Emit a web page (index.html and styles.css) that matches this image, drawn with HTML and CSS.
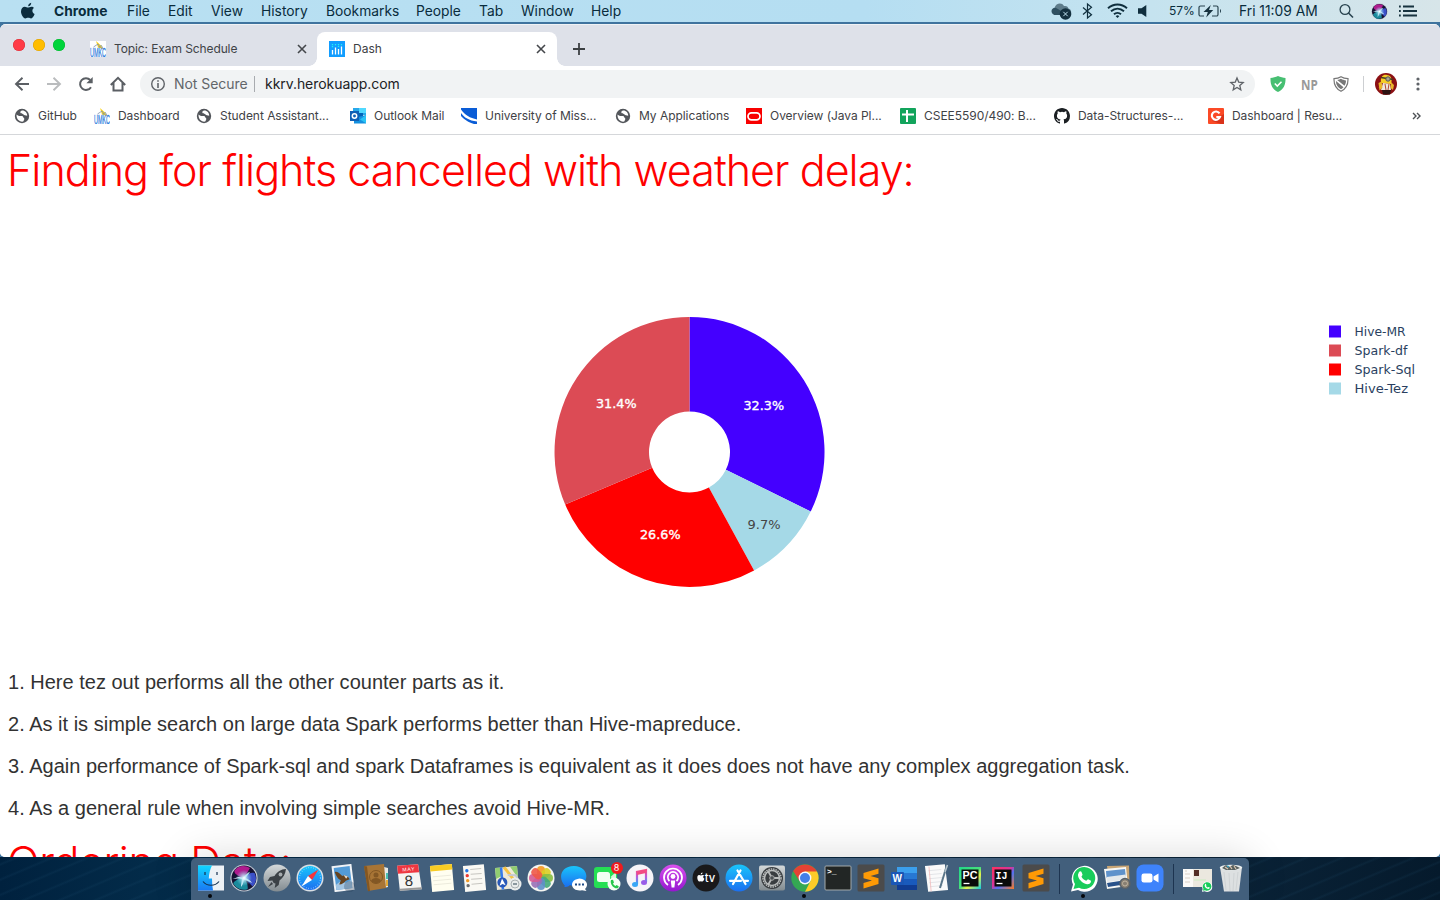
FILE: index.html
```html
<!DOCTYPE html>
<html lang="en">
<head>
<meta charset="utf-8">
<title>Dash</title>
<link rel="stylesheet" href="styles.css">
</head>
<body>
<svg class="defs" width="0" height="0">
  <defs>
    <linearGradient id="blue" x2="0" y2="1"><stop stop-color="#19c5fb"/><stop offset="1" stop-color="#1b6ff0"/></linearGradient>
    <linearGradient id="silver" x2="0" y2="1"><stop stop-color="#d4d8d9"/><stop offset="1" stop-color="#828b90"/></linearGradient>
    <linearGradient id="finder" x2="0" y2="1"><stop stop-color="#10d5ff"/><stop offset="1" stop-color="#1a79f4"/></linearGradient>
    <linearGradient id="music" x2="0" y2="1"><stop stop-color="#fa4b83"/><stop offset=".5" stop-color="#b65ce0"/><stop offset="1" stop-color="#2ba9f5"/></linearGradient>
    <linearGradient id="pod" x2="0" y2="1"><stop stop-color="#d951ee"/><stop offset="1" stop-color="#9416cf"/></linearGradient>
    <linearGradient id="ij" x2="1" y2="1"><stop stop-color="#fe315d"/><stop offset=".45" stop-color="#d6359b"/><stop offset=".6" stop-color="#4e72f5"/><stop offset="1" stop-color="#f97a25"/></linearGradient>
    <linearGradient id="pc" x2="1" y2="1"><stop stop-color="#21d789"/><stop offset=".5" stop-color="#48e07c"/><stop offset=".65" stop-color="#e9f04a"/><stop offset="1" stop-color="#0bcbe5"/></linearGradient>
    <radialGradient id="glow"><stop stop-color="#fff"/><stop offset=".3" stop-color="#bfeaf7" stop-opacity=".8"/><stop offset="1" stop-color="#7fd4f0" stop-opacity="0"/></radialGradient>
    <symbol id="globe" viewBox="0 0 16 16"><circle cx="8" cy="8" r="7.200" fill="#53565b"/><path d="M2.600 6.500c1.800 2 3.400 1.200 5.400 1.600 1.300.3 1 1.400 1.900 1.900 1 .6.100 2.300-.7 3.600-4.200.6-7.200-3.300-6.600-7.100zM8 2.600c-1.700.7-2.200 1.700-1.200 2.700.8.800 2.200.2 2.700 1.300.5 1 2.300.9 3.700 1.200C13.400 5 11 2.400 8 2.600z" fill="#fff"/></symbol>
    <symbol id="umkc" viewBox="0 0 16 16"><path d="M6 0l5 4.500L13 8 8 6.500z" fill="#f9d21d"/><path d="M3.500 6L8 3l2.500 4M8.500 6l3-1.500L13 8" fill="none" stroke="#7d91a8" stroke-width=".8"/><text x="0" y="15.600" font-family="Liberation Sans" font-size="12.500" fill="#2f7ddd" stroke="#2f7ddd" stroke-width=".3" textLength="16" lengthAdjust="spacingAndGlyphs">UMKC</text></symbol>
    <symbol id="sublime" viewBox="0 0 28 28"><rect x=".5" y=".5" width="27" height="27" rx="1.500" fill="#4b4b4b"/><path d="M21.500 4.500v5.300L13.500 12l8 2.300V20L6.500 24.500V19l8.500-2.400-8.500-2.400V9z" fill="#ff9a05"/></symbol>
    <symbol id="wa" viewBox="0 0 28 28"><path d="M1 27.500l2-7A13 13 0 1 1 8 26z" fill="#fff"/><path d="M3.500 25l1.500-5A11 11 0 1 1 9 23.700z" fill="#19cc5b"/><path d="M9 8c1-1.200 2.200-.8 2.500 0l1 2.500c.2.800-1 1.700-1 2.200 1.200 2.100 2.600 3.200 4.600 4.100.8-.2 1.300-1.700 2-1.600l2.900 1.500c.3 2.600-2.200 3.700-4 3.500C12.500 19.500 7.500 14.500 8 10.500z" fill="#fff"/></symbol>
    <symbol id="colorwheel" viewBox="0 0 28 28"><circle cx="14" cy="14" r="13.600" fill="#c3ccd6"/><circle cx="14" cy="14" r="12.500" fill="#151232"/><path d="M14 14C5 15 3 19 3.500 20a12 12 0 0 0 14 5.200c1-3-1-8-3.500-11.200z" fill="#1a8a9c"/><path d="M14 14C6 12 3 8 5 6c4-5 10-5 15-2z" fill="#b01c8e"/><path d="M14 14c4-5 8-6 10.500-5 3 6 1 11-2 13.500C20 20 18 17 14 14z" fill="#3b50c8"/><path d="M2.500 15C8 12.500 10 12.500 13 13.500c4-4 5-5 7-5.500l-4.500 6c4 2 5.500 3 6.500 5-4-2-6-3-8-3-1 4-2 6-3 7 0-4 1-6 1-8-4-1-6.500-.5-9.500 0z" fill="#cdeaf6"/><circle cx="14" cy="14" r="8" fill="url(#glow)"/></symbol>
  </defs>
</svg>
<div class="desktop">
<header class="menubar">
  <svg width="16" height="18" viewBox="0 0 16 18"><path d="M11.200.8c.2 1.800-1.300 3.500-3 3.500C8 2.600 9.600 1 11.200.8zM14 6.100c-2.400 1.400-2 4.800.6 5.900-.8 2.300-2.200 4.400-3.500 4.400-1.200 0-1.500-.7-2.900-.7s-1.800.7-2.900.7C3.300 16.400 1 12.500 1 9.500c0-3 1.800-4.700 3.800-4.700 1.300 0 2.400.8 3.200.8s2-.9 3.500-.9c1 0 1.900.5 2.500 1.400z" fill="#0b2c3e"/></svg>
  <b>Chrome</b><span>File</span><span>Edit</span><span>View</span><span>History</span><span>Bookmarks</span><span>People</span><span>Tab</span><span>Window</span><span>Help</span>
  <svg width="21" height="18" viewBox="0 0 21 18"><path d="M4 12.500A3.700 3.700 0 0 1 3.500 6C5 .8 11 .2 13 4c3-.5 4 1 4.500 2.500 2.500.5 3 3 2.500 5z" fill="#5e7c8b"/><path d="M1 11c-2-4 2.500-6.500 5-4.500l5 3v3.500H4c-1 0-2-.500-3-2z" fill="#2e4f60"/><circle cx="14.500" cy="12" r="5.800" fill="#14303f"/><path d="M12.300 9.800l4.400 4.400m0-4.400l-4.400 4.400" stroke="#bfe0ee" stroke-width="1"/></svg>
  <svg width="11" height="18" viewBox="0 0 11 18"><path d="M1 5.500l8.500 7.200L5.500 16V2l4 3.300L1 12.500" fill="none" stroke="#0f2e3d" stroke-width="1.200"/></svg>
  <svg width="22" height="18" viewBox="0 0 22 18"><g fill="none" stroke="#0f2e3d" stroke-width="1.900"><path d="M1 6.200c5.500-5 13.500-5 19 0"/><path d="M4 9.300c4-3.500 9-3.500 13 0"/><path d="M7 12.300c2-1.900 5-1.900 7 0"/></g><path d="M8.700 14.200a2.500 2.500 0 0 1 3.600 0l-1.800 1.900z" fill="#0f2e3d"/></svg>
  <svg width="10" height="18" viewBox="0 0 10 18"><path d="M0 6.300h3.500L8.300 3v12l-4.800-3.300H0z" fill="#0f2e3d"/></svg>
  <span class="battery">57%</span>
  <svg width="24" height="18" viewBox="0 0 24 18"><path d="M7 4H2.500A1.500 1.500 0 0 0 1 5.500v7A1.500 1.500 0 0 0 2.500 14H6m8 0h4.500a1.500 1.500 0 0 0 1.500-1.500v-7A1.500 1.500 0 0 0 18.500 4H15" fill="none" stroke="#29434f" stroke-width="1.200"/><path d="M12.800 3L5.500 10h4.300l-1.600 5.500L15.200 8H11zM22 7c1.300.500 1.300 3.500 0 4z" fill="#17323f"/></svg>
  <span>Fri 11:09 AM</span>
  <svg width="16" height="18" viewBox="0 0 16 18"><circle cx="6" cy="7.500" r="4.900" fill="none" stroke="#29434f" stroke-width="1.300"/><path d="M9.500 11l4.500 4.500" stroke="#29434f" stroke-width="1.600"/></svg>
  <svg width="17" height="17"><use href="#colorwheel"/></svg>
  <svg width="19" height="18" viewBox="0 0 19 18"><path d="M0 4.500h1.800M0 9h1.800M0 13.500h1.800M4 4.500h11M4 9h14M4 13.500h14" stroke="#17323f" stroke-width="1.900"/></svg>
</header>

<main class="window">
  <div class="tabs">
    <div class="lights"><i class="red"></i><i class="amber"></i><i class="green"></i></div>
    <div class="tab">
      <svg class="favicon white" width="16" height="16"><use href="#umkc"/></svg>
      <span class="topic">Topic: Exam Schedule</span>
      <svg class="close" width="10" height="10" viewBox="0 0 10 10"><path d="M1 1l8 8M9 1L1 9"/></svg>
    </div>
    <div class="tab active">
      <svg class="favicon" width="16" height="16" viewBox="0 0 16 16"><path d="M0 0h16v16H0z" fill="#119dff"/><path d="M3.500 9v4.500M6.500 6.500v7M9.500 8v5.500M12.500 5.500v8" stroke="#fff" stroke-width="1.300"/><path d="M3.500 3v4M6.500 3v2M9.500 3v3M12.500 3v1.500" stroke="#25f2f2" stroke-width="1.300" stroke-dasharray="1.200 .8"/></svg>
      <span>Dash</span>
      <svg class="close" width="10" height="10" viewBox="0 0 10 10"><path d="M1 1l8 8M9 1L1 9"/></svg>
    </div>
    <svg class="newtab" width="12" height="12" viewBox="0 0 12 12"><path d="M6 0v12M0 6h12" stroke="#3c4043" stroke-width="1.800"/></svg>
  </div>

  <div class="toolbar">
    <svg width="16" height="16" viewBox="0 0 16 16"><path d="M15 8H2m6.500-6.300L2 8l6.500 6.300" fill="none" stroke="#5b5f64" stroke-width="1.900"/></svg>
    <svg width="16" height="16" viewBox="0 0 16 16"><path d="M1 8h13M7.500 1.700L14 8l-6.500 6.300" fill="none" stroke="#babcbe" stroke-width="1.900"/></svg>
    <svg width="16" height="16" viewBox="0 0 16 16"><path d="M13 11.200A5.900 5.900 0 1 1 12.300 4" fill="none" stroke="#5b5f64" stroke-width="2"/><path d="M14.700 1v6.300H8.400z" fill="#5b5f64"/></svg>
    <svg width="16" height="16" viewBox="0 0 16 16"><path d="M.8 9L8 1.800 15.200 9M3.500 7v7.600h9V7" fill="none" stroke="#5b5f64" stroke-width="2"/></svg>
    <div class="omnibox">
      <svg width="16" height="16" viewBox="0 0 16 16"><circle cx="8" cy="8" r="6.300" fill="none" stroke="#5f6368" stroke-width="1.400"/><path d="M8 4.200v1.600M8 7v5" stroke="#5f6368" stroke-width="1.600"/></svg>
      <span class="insecure">Not Secure</span><i class="bar"></i><span class="url">kkrv.herokuapp.com</span>
      <svg class="star" width="16" height="16" viewBox="0 0 16 16"><path d="M8 2l1.700 4.100 4.500.4-3.400 2.900 1 4.400L8 11.500l-3.800 2.300 1-4.400-3.400-2.900 4.500-.4z" fill="none" stroke="#5f6368" stroke-width="1.300"/></svg>
    </div>
    <svg width="16" height="16" viewBox="0 0 16 16"><path d="M8 0c2.500 1.200 5 1.800 7.500 2 .3 7-2 11.500-7.500 14C2.500 13.500.2 9 .5 2 3 1.800 5.500 1.200 8 0z" fill="#47bf72"/><path d="M4.800 7.500l2.500 2.600 4.200-4.300" stroke="#fff" stroke-width="1.500" fill="none"/></svg>
    <span class="np">NP</span>
    <svg width="16" height="16" viewBox="0 0 16 16"><path d="M8 .7C10 2 12.500 2.600 15 2.700 15.200 8 13.500 12.500 8 15.300 2.500 12.500.8 8 1 2.700 3.500 2.600 6 2 8 .7z" fill="none" stroke="#777" stroke-width="1.200"/><path d="M8 2.800c1.500 1 3.200 1.400 5 1.600 0 2-.5 3.800-1.500 5.300L4.200 3.900C5.600 3.700 7 3.400 8 2.800zM3 5l7.500 6.200C9.800 12 9 12.600 8 13.200 4.200 11 3 8.500 3 5z" fill="#777"/></svg>
    <i class="divider"></i>
    <svg width="22" height="22" viewBox="0 0 22 22"><circle cx="11" cy="11" r="11" fill="#8b1013"/><path d="M6 10c-1-7 3-9 6-8 3 0 6 3 4 9z" fill="#f5cd27"/><path d="M6 4.500l12 2" stroke="#4a3b20" stroke-width="1.500"/><circle cx="13" cy="6" r="2.200" fill="#a9a58f" stroke="#555"/><path d="M8 10l7 1 1 6H6z" fill="#eee8df"/><path d="M10 11l1 6M14 11l-1 6M6 10l-2 5" stroke="#b14432"/><path d="M3.500 10l3-1.500 1 6-3 3zM16 9l3 3-1 5-2.500-2z" fill="#e9b52a"/><path d="M7 17h9l-1 4.400-7 .2z" fill="#2c1212"/></svg>
    <svg width="4" height="16" viewBox="0 0 4 16"><circle cx="2" cy="3" r="1.600"/><circle cx="2" cy="8" r="1.600"/><circle cx="2" cy="13" r="1.600"/></svg>
  </div>

  <nav class="bookmarks">
    <a><svg width="16" height="16"><use href="#globe"/></svg><span>GitHub</span></a>
    <a><svg width="16" height="16"><use href="#umkc"/></svg><span>Dashboard</span></a>
    <a><svg width="16" height="16"><use href="#globe"/></svg><span>Student Assistant...</span></a>
    <a><svg width="16" height="16" viewBox="0 0 16 16"><path d="M3 0h13v7H3z" fill="#28a8ea"/><path d="M9 0h7v5H9z" fill="#50d9ff"/><path d="M3 5h10v6H3z" fill="#0364b8"/><path d="M4 15.500V10l12-3v8.500z" fill="#1490df"/><path d="M16 7l-6 4.500 6 3.800z" fill="#28c3f5"/><path d="M0 3h9v10H0z" fill="#0f5fb5"/><circle cx="4.500" cy="8" r="2.200" fill="none" stroke="#fff" stroke-width="1.500"/></svg><span>Outlook Mail</span></a>
    <a><svg width="16" height="16" viewBox="0 0 16 16"><path d="M0 0h16v16H0z" fill="#0a5cd6"/><path d="M0 1.500c4 5.500 9 8.500 16 10v2C8 12.500 3 9.500 0 5zM0 8c4 4 7 6 13 8H0z" fill="#fff"/></svg><span>University of Miss...</span></a>
    <a><svg width="16" height="16"><use href="#globe"/></svg><span>My Applications</span></a>
    <a><svg width="16" height="16" viewBox="0 0 16 16"><path d="M0 0h16v16H0z" fill="#f80000"/><rect x="2" y="4.800" width="12" height="7" rx="3.500" fill="none" stroke="#fff" stroke-width="1.700"/></svg><span>Overview (Java Pl...</span></a>
    <a><svg width="16" height="16" viewBox="0 0 16 16"><rect width="16" height="16" rx="1" fill="#12a45c"/><path d="M7 2v12M2 6.500h12" stroke="#fff" stroke-width="2"/></svg><span>CSEE5590/490: B...</span></a>
    <a><svg width="16" height="16" viewBox="0 0 16 16"><path fill="#1b1f23" d="M8 0C3.580 0 0 3.580 0 8c0 3.540 2.290 6.530 5.470 7.590.4.070.55-.17.55-.38 0-.19-.01-.82-.01-1.490-2.010.37-2.530-.49-2.690-.94-.09-.23-.48-.94-.82-1.130-.28-.15-.68-.52-.01-.53.63-.01 1.080.58 1.230.82.72 1.210 1.870.87 2.330.66.070-.52.28-.87.51-1.070-1.780-.2-3.640-.89-3.640-3.950 0-.87.31-1.590.82-2.150-.08-.2-.36-1.020.08-2.120 0 0 .67-.21 2.200.82a7.400 7.400 0 0 1 4 0c1.530-1.040 2.200-.82 2.200-.82.44 1.100.16 1.920.08 2.120.51.56.82 1.270.82 2.150 0 3.070-1.870 3.750-3.650 3.950.29.25.54.73.54 1.480 0 1.070-.01 1.930-.01 2.200 0 .21.15.46.55.38A8.010 8.010 0 0 0 16 8c0-4.420-3.580-8-8-8z"/></svg><span>Data-Structures-...</span></a>
    <a><svg width="16" height="16" viewBox="0 0 16 16"><rect width="16" height="16" rx="1" fill="#fb4a26"/><path d="M4 13l9 3h3V6z" fill="#d9321a"/><path d="M11.500 5.300A4.200 4.200 0 1 0 12 9H8.300" fill="none" stroke="#fff" stroke-width="2.100"/></svg><span>Dashboard | Resu...</span></a>
    <svg width="10" height="8" viewBox="0 0 10 8"><path d="M2 1l3 3-3 3M6 1l3 3-3 3" fill="none" stroke="#4c5054" stroke-width="1.400"/></svg>
  </nav>

  <section class="page">
    <h1>Finding for flights cancelled with weather delay:</h1>
    <svg class="chart" width="1440" height="450" viewBox="0 210 1440 450">
      <g transform="translate(689.500 452)">
        <path fill="#4400ff" d="M0-135A135 135 0 0 1 121.200 59.500L36.360 17.850A40.500 40.500 0 0 0 0-40.500z"/>
        <path fill="#a5d9e7" d="M121.200 59.500A135 135 0 0 1 64.600 118.500L19.380 35.560A40.500 40.500 0 0 0 36.360 17.850z"/>
        <path fill="#ff0000" d="M64.600 118.500A135 135 0 0 1-124.300 52.600L-37.300 15.800A40.500 40.500 0 0 0 19.380 35.560z"/>
        <path fill="#dc4b55" d="M-124.300 52.600A135 135 0 0 1 0-135V-40.500A40.500 40.500 0 0 0-37.300 15.800z"/>
      </g>
      <g class="percent">
        <text x="743.500" y="410" textLength="40.500" lengthAdjust="spacingAndGlyphs">32.3%</text>
        <text x="596" y="408" textLength="40.500" lengthAdjust="spacingAndGlyphs">31.4%</text>
        <text x="640" y="539" textLength="40.500" lengthAdjust="spacingAndGlyphs">26.6%</text>
        <text class="dark" x="747.500" y="529" textLength="33" lengthAdjust="spacingAndGlyphs">9.7%</text>
      </g>
      <g class="legend">
        <path fill="#4400ff" d="M1329 325.500h12v12h-12z"/><text x="1354.500" y="336" textLength="51" lengthAdjust="spacingAndGlyphs">Hive-MR</text>
        <path fill="#dc4b55" d="M1329 344.500h12v12h-12z"/><text x="1354.500" y="355" textLength="53" lengthAdjust="spacingAndGlyphs">Spark-df</text>
        <path fill="#ff0000" d="M1329 363.500h12v12h-12z"/><text x="1354.500" y="374" textLength="60.500" lengthAdjust="spacingAndGlyphs">Spark-Sql</text>
        <path fill="#a5d9e7" d="M1329 382.500h12v12h-12z"/><text x="1354.500" y="393" textLength="53.500" lengthAdjust="spacingAndGlyphs">Hive-Tez</text>
      </g>
    </svg>
    <p class="p1">1. Here tez out performs all the other counter parts as it.</p>
    <p>2. As it is simple search on large data Spark performs better than Hive-mapreduce.</p>
    <p>3. Again performance of Spark-sql and spark Dataframes is equivalent as it does does not have any complex aggregation task.</p>
    <p>4. As a general rule when involving simple searches avoid Hive-MR.</p>
    <h1 class="next">Ordering Data:</h1>
  </section>
</main>

<footer class="wallpaper">
<div class="dock">
  <div class="app running"><svg viewBox="0 0 28 28"><path d="M1 1.500h26v25H1z" fill="#edf1f6"/><path d="M1 1.500h14c-2 4-3 8-3.200 13H15c0 4 .3 8 1 12H1z" fill="url(#finder)"/><path d="M8 8v3M20 8v3M6 17.500c4 5 12 5 16 0" stroke="#153152" stroke-width="1.200" fill="none"/></svg></div>
  <div class="app"><svg><use href="#colorwheel"/></svg></div>
  <div class="app"><svg viewBox="0 0 28 28"><circle cx="14" cy="14" r="13.500" fill="url(#silver)"/><path d="M23 5c-5 0-9 3-11.500 7L7 13l-2.500 4 5-.5c.3 2 1.500 3 3 3l-.8 4.500 4-3 .8-4.500C20 14 22.500 10 23 5z" fill="#3b4146"/><circle cx="17.500" cy="10.500" r="1.900" fill="#a5abae"/><path d="M8.500 18L5 23l5-3" fill="#3b4146"/></svg></div>
  <div class="app"><svg viewBox="0 0 28 28"><circle cx="14" cy="14" r="13.500" fill="#d9dfe4"/><circle cx="14" cy="14" r="12" fill="url(#blue)"/><circle cx="14" cy="14" r="10.500" fill="none" stroke="#b8eaff" stroke-width="1.200" stroke-dasharray=".5 2"/><path d="M22.500 5.500L16 16l-4-4z" fill="#f3343b"/><path d="M5.500 22.500L12 12l4 4z" fill="#fff"/></svg></div>
  <div class="app"><svg viewBox="0 0 28 28"><g transform="rotate(-7 14 14)"><path d="M4 1h20v26H4z" fill="#f1f3f6"/><path d="M6 3h16v22H6z" fill="#539bd6"/><path d="M6 20l5-3 5 2 6-2v8H6z" fill="#a2c5e3"/><path d="M6.500 7c2-1 5 2 7 5 3-1 6 1 7 4l-4 1c-2 2-4 3-7 3l2-4c-3-2-4-5-5-9z" fill="#66431f"/><path d="M15 11l4 2-2 2z" fill="#e7dccb"/></g><circle cx="20.500" cy="22.500" r="5.500" fill="#263a52" fill-opacity=".3"/></svg></div>
  <div class="app"><svg viewBox="0 0 28 28"><path d="M22 3l4 1v19l-4 1z" fill="#e8e9e5"/><path d="M24 9h2v6h-2z" fill="#4bc1b1"/><path d="M24 16h2v6h-2z" fill="#e3aa37"/><path d="M2 2L22 0l2 24-18 3z" fill="#a87536"/><path d="M2 2l3 .5L8 27l-2 .2z" fill="#855721"/><circle cx="14" cy="13" r="6.500" fill="none" stroke="#825724"/><circle cx="14" cy="11" r="2.500" fill="#825724"/><path d="M9 17c1-4 9-4 10 0-3 3-7 3-10 0z" fill="#825724"/></svg></div>
  <div class="app"><svg viewBox="0 0 28 28"><g transform="rotate(-4 14 14)"><path d="M3 1h21l2 25H4z" fill="#f5f5f3"/><path d="M4 24h22v2H4z" fill="#999"/><path d="M3 1h21l.5 8H3.300z" fill="#ee3741"/><text x="8" y="7" font-size="5" fill="#fff" textLength="12">MAY</text><text x="9.500" y="22" font-size="15" fill="#333">8</text></g></svg></div>
  <div class="app"><svg viewBox="0 0 28 28"><g transform="rotate(-5 14 14)"><path d="M3 1h22v26H3z" fill="#fffef0"/><path d="M3 1h22v5.500H3z" fill="#f8cc24"/><path d="M5 12h18M5 16h18M5 20h18" stroke="#e1dfd0" stroke-width=".6"/></g></svg></div>
  <div class="app"><svg viewBox="0 0 28 28"><g transform="rotate(-5 14 14)"><path d="M3 1h21v26H3z" fill="#faf9f4"/><path d="M10 5h11M10 10h11M10 15h11M10 20h11" stroke="#c7c6c1"/><circle cx="6.500" cy="6" r="1.700" fill="#2377e9"/><circle cx="6.500" cy="11" r="1.700" fill="#ed3931"/><circle cx="6.500" cy="16" r="1.700" fill="#f29b27"/><circle cx="6.500" cy="21" r="1.700" fill="#6c6d6f"/></g></svg></div>
  <div class="app"><svg viewBox="0 0 28 28"><g transform="rotate(-5 13 14)"><path d="M2 3h22v22H2z" fill="#eee9d8"/><path d="M2 3h7l-2 9-5 2zM17 3h7v12z" fill="#91cd71"/><path d="M11 3l4 6 8 13" fill="none" stroke="#f6c342" stroke-width="3"/><path d="M8 3v22" stroke="#3679ec" stroke-width="2.500"/><circle cx="8" cy="18" r="5" fill="#2858b8"/><path d="M5 21l3-7 3 7-3-1.500z" fill="#fff"/><path d="M14 11l8 1 2 5" fill="none" stroke="#c4c8d2" stroke-width="2"/></g><circle cx="21" cy="20" r="6.500" fill="#e9eceb"/><circle cx="21" cy="20" r="4" fill="none" stroke="#a9b0b1"/><path d="M19 20h4" stroke="#8b989e" stroke-width="2"/></svg></div>
  <div class="app"><svg viewBox="0 0 28 28"><circle cx="14" cy="14" r="13.500" fill="#f5f5f1"/><g fill-opacity=".9"><rect x="10" y="2" width="8" height="12" rx="4" fill="#f79a20"/><rect x="10" y="2" width="8" height="12" rx="4" fill="#dbcf23" transform="rotate(45 14 14)"/><rect x="10" y="2" width="8" height="12" rx="4" fill="#88bf43" transform="rotate(90 14 14)"/><rect x="10" y="2" width="8" height="12" rx="4" fill="#45aa7b" transform="rotate(135 14 14)"/><rect x="10" y="2" width="8" height="12" rx="4" fill="#5e90c9" transform="rotate(180 14 14)"/><rect x="10" y="2" width="8" height="12" rx="4" fill="#9871b7" transform="rotate(225 14 14)"/><rect x="10" y="2" width="8" height="12" rx="4" fill="#d55b94" transform="rotate(270 14 14)"/><rect x="10" y="2" width="8" height="12" rx="4" fill="#ef5948" transform="rotate(315 14 14)"/></g></svg></div>
  <div class="app"><svg viewBox="0 0 28 28"><path d="M5 22c-7-7-5-20 9-20 16 0 17 20 0 20-2 0-3-.5-4-1-2 2-4 2-6 2z" fill="url(#blue)"/><path d="M12 21a7.500 6.200 0 1 1 13 4l1.500 2-4.500-.8c-5 1-9.500-1-10-5.200z" fill="#fff"/><path d="M15 20.500h2M18.500 20.500h2M22 20.500h2" stroke="#1d4a88" stroke-width="2"/></svg></div>
  <div class="app"><svg viewBox="0 0 28 28"><rect x="1" y="3" width="23" height="21" rx="3" fill="#25df54"/><rect x="4" y="8" width="13" height="10" rx="2.500" fill="#f0fff2"/><path d="M17.500 13L23 8v10z" fill="#d8f5dc"/><circle cx="21" cy="20" r="6.500" fill="#f5fff6"/><path d="M18 16l2-.2 1 2.600-1 1c.8 1.500 1.200 1.900 2.500 2.500l1-1 2.300 1.300-.8 2c-4 1.200-8.500-4.200-7-8.200z" fill="#26c74c"/></svg><b class="badge">8</b></div>
  <div class="app"><svg viewBox="0 0 28 28"><circle cx="14" cy="14" r="13.500" fill="#f6f4f8"/><path d="M11 20V8l9-2v12" fill="none" stroke="url(#music)" stroke-width="2.200"/><path d="M11 8l9-2v3l-9 2z" fill="#f24c83"/><ellipse cx="9" cy="20.500" rx="3" ry="2.500" fill="#39a6f6"/><ellipse cx="18" cy="18.500" rx="3" ry="2.500" fill="#9a5de8"/></svg></div>
  <div class="app"><svg viewBox="0 0 28 28"><circle cx="14" cy="14" r="13.500" fill="url(#pod)"/><g fill="none" stroke="#fff" stroke-width="1.700"><path d="M9 21a9 9 0 1 1 10 0M10.500 17a5.200 5.200 0 1 1 7 0"/></g><circle cx="14" cy="12.500" r="2.400" fill="#fff"/><path d="M11.800 16.500h4.400l-.8 7h-2.800z" fill="#fff"/></svg></div>
  <div class="app"><svg viewBox="0 0 28 28"><circle cx="14" cy="14" r="13.500" fill="#19191b"/><path d="M12 11.500c-1.200.8-1 2.600.4 3.200-.5 1.500-1.300 2.800-2.100 2.800-.6 0-.8-.3-1.500-.3s-.9.300-1.500.3C5.500 17.500 4 11 7.200 11c.7 0 1.100.4 1.700.4.700 0 2-1 3.100.1zM10.600 8.500c0 1.200-.8 2-1.900 2 0-1.100.8-1.900 1.900-2z" fill="#fff"/><text x="12.700" y="17.500" font-family="Inter" font-size="11.500" font-weight="500" fill="#fff" textLength="10.500" lengthAdjust="spacingAndGlyphs">tv</text></svg></div>
  <div class="app"><svg viewBox="0 0 28 28"><circle cx="14" cy="14" r="13.500" fill="url(#blue)"/><path d="M15.500 6.500L8 20M12.500 6.500L20.500 20M5 16.800h11M19 16.800h4" stroke="#fff" stroke-width="2.200" stroke-linecap="round"/></svg></div>
  <div class="app"><svg viewBox="0 0 28 28"><rect x="1" y="1.500" width="26" height="25" rx="2" fill="url(#silver)"/><circle cx="14" cy="14" r="11" fill="#393d40"/><circle cx="14" cy="14" r="9" fill="none" stroke="#b9bcbc" stroke-width="1.500" stroke-dasharray="1.600 .8"/><circle cx="14" cy="14" r="7.500" fill="none" stroke="#b9bcbc" stroke-width="1.500"/><path d="M14 14H22M14 14L10 7M14 14l-4 7" stroke="#b9bcbc" stroke-width="1.800"/><circle cx="14" cy="14" r="2.300" fill="#4b5053" stroke="#aaa"/></svg></div>
  <div class="app running"><svg viewBox="0 0 28 28"><circle cx="14" cy="14" r="13.700" fill="#34a853"/><path d="M14 14L2.200 7A13.700 13.700 0 0 1 26 7.600z" fill="#e44234"/><path d="M13.900 7.600H26A13.700 13.700 0 0 1 14 27.700L19.500 17z" fill="#fdcb29"/><path d="M2.200 7l6.300 10 5.500-3V7.600z" fill="#e44234"/><circle cx="14" cy="14" r="6.400" fill="#f7faff"/><circle cx="14" cy="14" r="5" fill="#447fe8"/></svg></div>
  <div class="app"><svg viewBox="0 0 28 28"><rect x="1" y="2" width="26" height="24" rx="1" fill="#222625" stroke="#a4aaaa"/><text x="3" y="9.500" font-family="Liberation Mono" font-weight="bold" font-size="8" fill="#fff">&gt;_</text></svg></div>
  <div class="app"><svg><use href="#sublime"/></svg></div>
  <div class="app"><svg viewBox="0 0 28 28"><path d="M7 3h20v6H7z" fill="#3b9fed"/><path d="M7 9h20v6H7z" fill="#2778d3"/><path d="M7 15h20v6H7z" fill="#195abc"/><path d="M7 21h20v5H7z" fill="#103c92"/><rect x="1" y="8" width="13" height="13" rx="1" fill="#1a56b6"/><text x="2.500" y="18" font-family="Liberation Sans" font-weight="bold" font-size="10" fill="#fff">W</text></svg></div>
  <div class="app"><svg viewBox="0 0 28 28"><g transform="rotate(-5 14 14)"><path d="M3 1h20l1 26H4z" fill="#fafafa"/><path d="M6 6h13M6 10h13M6 14h13M6 18h13M6 22h13" stroke="#e3e5e8"/><path d="M7 2v25" stroke="#f1b3b3" stroke-width=".7"/></g><path d="M24 1L17 24" stroke="#5b7689" stroke-width="2"/><path d="M24.500 1l-2.500 7" stroke="#b5c3cb" stroke-width="1.500"/></svg></div>
  <div class="app"><svg viewBox="0 0 28 28"><path d="M3 3h22v22H3z" fill="url(#pc)"/><path d="M5.500 5.500h17v17h-17z" fill="#090b0a"/><text x="6.500" y="15" font-family="Liberation Sans" font-weight="bold" font-size="10.500" fill="#fff" textLength="15" lengthAdjust="spacingAndGlyphs">PC</text><path d="M7.500 19.500h6" stroke="#fff" stroke-width="1.300"/></svg></div>
  <div class="app"><svg viewBox="0 0 28 28"><path d="M3 3h22v22H3z" fill="url(#ij)"/><path d="M5.500 5.500h17v17h-17z" fill="#090b0a"/><text x="6.500" y="15" font-family="Liberation Mono" font-weight="bold" font-size="11" fill="#fff" textLength="12" lengthAdjust="spacingAndGlyphs">IJ</text><path d="M7.500 19.500h6" stroke="#fff" stroke-width="1.300"/></svg></div>
  <div class="app"><svg><use href="#sublime"/></svg></div>
  <i class="sep"></i>
  <div class="app running"><svg><use href="#wa"/></svg></div>
  <div class="app"><svg viewBox="0 0 28 28"><path d="M4 2l22-.5.500 18-20 2z" fill="#c9a574"/><path d="M1 5l22-2 2 19-21 3z" fill="#f8f8f5"/><path d="M3 7l19-2 .7 7L3.500 14z" fill="#5f92cb"/><path d="M3.500 13L22.700 10.500l.5 5-19 2.500z" fill="#e5e9ec"/><path d="M4 19l19.200-3 .8 4-19 3z" fill="#29528a"/><circle cx="22" cy="19.500" r="5" fill="#887f72" stroke="#56616b" stroke-width="1.500"/><circle cx="22" cy="19.500" r="2.500" fill="none" stroke="#beb3a0"/></svg></div>
  <div class="app"><svg viewBox="0 0 28 28"><rect x=".5" y=".5" width="27" height="27" rx="7" fill="#3e83fb"/><rect x="5.500" y="9.500" width="11" height="9" rx="2.300" fill="#fff"/><path d="M17.500 12.500L22.500 9.500v9l-5-3z" fill="#fff"/></svg></div>
  <i class="sep"></i>
  <div class="app"><svg class="wide" viewBox="0 0 30 28"><path d="M0 5h29v18H0z" fill="#ebe8df"/><path d="M0 5h10v18H0z" fill="#faf9f7"/><path d="M2 7h2M2 10h5M2 14h5M2 18h5" stroke="#d8cfc6"/><path d="M11 6h5v6h-5z" fill="#542e28"/><path d="M11 16h12" stroke="#dbead0" stroke-width="2"/><use href="#wa" x="18.500" y="17" width="11" height="11"/></svg></div>
  <div class="app"><svg viewBox="0 0 28 28"><path d="M3 3h22l-3 24.500H7z" fill="#dde0e1"/><path d="M7 8l2 18M12 9l1 18M17 9l-1 18M21 8l-2 18" stroke="#cfd3d5"/><ellipse cx="14" cy="3.500" rx="11.300" ry="2.800" fill="#edf0f0"/><path d="M5 4l4-3 3 2 4-2 3 1 4 2-5 2H9z" fill="#58605f"/><path d="M8 3l3 2M17 2l2 3M13 2l2 3" stroke="#d9c6b3" stroke-width="1.200"/><path d="M10 2l2 1" stroke="#3b9dbb" stroke-width="1.500"/></svg></div>
</div>
</footer>
</div>
</body>
</html>
```

FILE: styles.css
```css
* { box-sizing: border-box; }
body { margin: 0; overflow: hidden; font-family: Inter, sans-serif; }
svg { display: block; flex: none; }
.defs { position: absolute; }
.desktop { width: 1440px; height: 900px; overflow: hidden; background: #3f739e; display: flex; flex-direction: column; }

.menubar {
  flex: none; height: 24px; padding: 0 0 0 20px;
  display: grid; align-items: center;
  grid-template-columns: 34px 73px 41px 43px 50px 65px 90px 63px 42px 70px 460px 31px 25px 31px 31px 29px 41px 100px 32px 28px 41px;
  background: linear-gradient(90deg, #b9e0f2, #b5def2 60%, #c5e3ef 80%, #d7e5e9);
  border-bottom: 2px solid #3f739e;
  font-size: 13.8px; line-height: 20px; color: #092c3c; white-space: nowrap;
}
.menubar b { font-weight: 700; }
.menubar .battery { font-size: 12px; }

.window { flex: none; height: 833px; display: flex; flex-direction: column; background: #fff; border-radius: 6px 6px 5px 5px; overflow: hidden; }
.tabs { flex: none; height: 42px; padding-top: 7px; display: flex; background: #dee1e9; border-top: 1px solid #f0f2f5; }
.lights { width: 77px; padding: 7px 0 0 13px; display: flex; gap: 8px; }
.lights i { width: 12px; height: 12px; border-radius: 50%; }
.red { background: #ff3b47; box-shadow: inset 0 0 0 .5px #d92e38; }
.amber { background: #ffbd00; box-shadow: inset 0 0 0 .5px #dc9e00; }
.green { background: #00d43b; box-shadow: inset 0 0 0 .5px #00b52e; }
.tab { width: 240px; height: 34px; padding: 0 10px 0 13px; display: flex; align-items: center; gap: 8px; font-size: 12px; color: #404347; }
.tab span { padding-bottom: 2px; }
.topic { letter-spacing: -.1px; }
.tab.active { padding: 0 11px 0 12px; background: #fff; border-radius: 8px 8px 0 0; position: relative; color: #3c4043; }
.tab.active::before, .tab.active::after { content: ""; position: absolute; bottom: 0; width: 8px; height: 8px; }
.tab.active::before { left: -8px; background: radial-gradient(circle at 0 0, #dee1e9 7.500px, #fff 8px); }
.tab.active::after { right: -8px; background: radial-gradient(circle at 100% 0, #dee1e9 7.500px, #fff 8px); }
.favicon.white { background: #fff; }
.close { margin-left: auto; stroke: #44474b; stroke-width: 1.600; }
.newtab { margin: 11px 0 0 16px; }

.toolbar { flex: none; height: 35px; display: grid; align-items: center; padding: 1px 0 0 14px; grid-template-columns: 32px 32px 32px 30px 1130px 31px 32px 30px 12px 41px 12px; }
.omnibox { height: 28px; width: 1115px; border-radius: 14px; background: #f1f3f4; display: flex; align-items: center; padding: 0 10px; font-size: 14px; letter-spacing: -.05px; }
.omnibox span { padding-bottom: 2px; }
.insecure { margin-left: 8px; width: 80px; color: #62666a; }
.bar { width: 1px; height: 16px; background: #a8abaf; margin-right: 10px; }
.url { color: #202124; }
.star { margin-left: auto; }
.toolbar > svg:last-child { fill: #5f6368; }
.divider { width: 1px; height: 16px; background: #cdcfd2; }
.np { font: 700 14.500px "Open Sans", sans-serif; color: #999; transform: scaleX(.8); transform-origin: 0 50%; }

.bookmarks { flex: none; height: 34px; padding: 0 0 4px 14px; border-bottom: 1px solid #d5d7da; display: grid; align-items: center; grid-template-columns: 80px 102px 154px 111px 154px 131px 154px 154px 154px 203px 20px; font-size: 12px; letter-spacing: -.04px; color: #3f4246; }
.bookmarks a { display: flex; gap: 8px; align-items: center; white-space: nowrap; }

.page { flex: 1; min-height: 0; overflow: hidden; color: #323232; background: #fff; font-family: "Liberation Sans", sans-serif; }
.page h1 { margin: 8px 0 0 7px; height: 54px; line-height: 54px; font-family: Inter, sans-serif; font-weight: 300; font-size: 43px; letter-spacing: -.960px; color: #f00; white-space: nowrap; }
.chart { margin-top: 13px; }
.page p { margin: 0 0 12px 8px; height: 30px; line-height: 30px; font-size: 20px; letter-spacing: .009px; white-space: nowrap; }
.page .p1 { margin-top: 7px; }
.page h1.next { margin-top: 8px; letter-spacing: -.450px; }
.percent { font-family: "DejaVu Sans", sans-serif; font-size: 12px; fill: #fff; stroke: #fff; stroke-width: .35px; }
.percent .dark { fill: #444; stroke: none; }
.legend { font-family: "DejaVu Sans", sans-serif; font-size: 12px; fill: #2a3f5f; }

.wallpaper { flex: none; height: 43px; padding-top: 1px; display: flex; justify-content: center; background: repeating-linear-gradient(157deg, transparent 0 5px, rgba(40, 95, 130, .12) 7px, transparent 9px 14px), linear-gradient(90deg, #00213e, #032b49 10%, #0a2338 85%, #051a2c); }
.dock { width: 1058px; height: 42px; padding: 0 2.500px; display: flex; background: #425f7c; border-radius: 5px 5px 0 0; box-shadow: 0 0 40px rgba(0, 0, 0, .16); position: relative; }
.app { width: 33px; height: 42px; padding: 5.500px 0 0 3px; position: relative; font-family: "Liberation Sans", sans-serif; }
.app svg { width: 28px; height: 28px; }
.app svg.wide { width: 30px; margin-left: -1px; }
.running::after { content: ""; position: absolute; left: 14.500px; bottom: 2px; width: 4px; height: 4px; border-radius: 50%; background: #05080c; }
.badge { position: absolute; right: 0; top: 4px; width: 12px; height: 12px; border-radius: 50%; background: #f01a1d; color: #fff; font: 9px/12px Inter, sans-serif; text-align: center; }
.sep { width: 15px; height: 30px; margin-top: 6px; background: linear-gradient(#1d3450, #1d3450) 7px 0 / 1px 100% no-repeat; }
```
